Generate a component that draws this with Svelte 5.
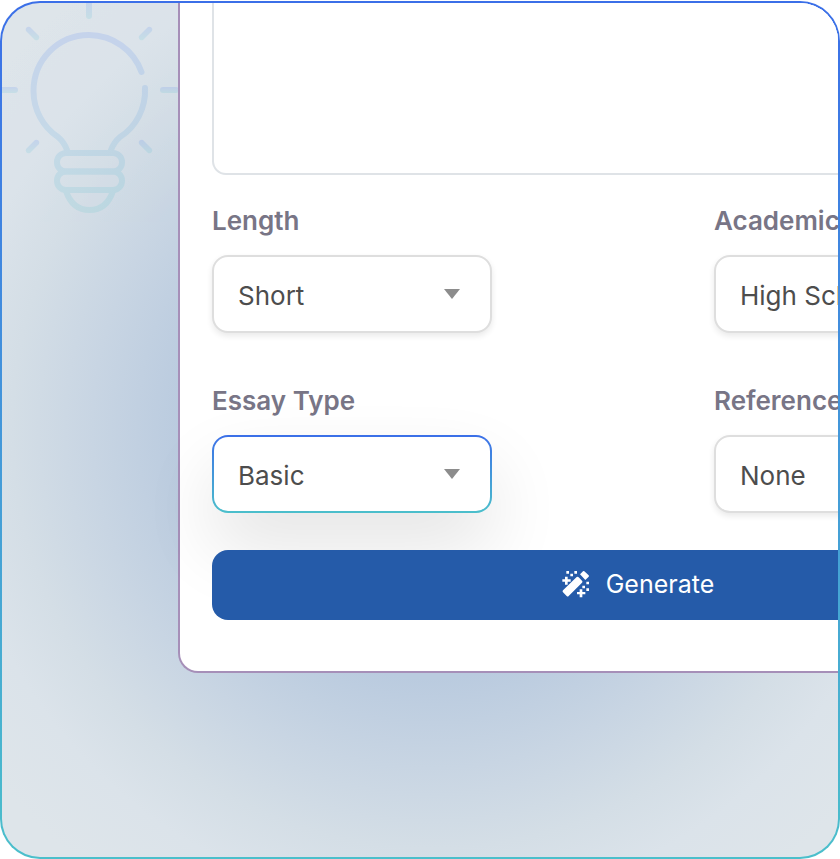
<script>
	let length = $state('Short');
	let level = $state('High School');
	let essayType = $state('Basic');
	let references = $state('None');
	let prompt = $state('');
</script>

{#snippet arrow()}
	<svg class="arrow" viewBox="0 0 16 10" aria-hidden="true">
		<path d="M0 0H16L8 10Z" />
	</svg>
{/snippet}

<main class="frame">
	<svg class="bulb" viewBox="0 0 180 216" aria-hidden="true">
		<defs>
			<linearGradient id="bulb" gradientUnits="userSpaceOnUse" x1="0" y1="30" x2="0" y2="210">
				<stop offset="0" stop-color="#3b6df0" />
				<stop offset="1" stop-color="#46bfc8" />
			</linearGradient>
			<linearGradient id="ray" x1="0" y1="0" x2="0" y2="1">
				<stop offset="0" stop-color="#3b6df0" />
				<stop offset="1" stop-color="#46bfc8" />
			</linearGradient>
		</defs>
		<g fill="none" stroke="url(#bulb)" stroke-width="6" stroke-linecap="round">
			<path d="M141.500 72A56 56 0 0 0 89 35C58 35 33.500 60 33.500 91C33.500 110 43 127 58 137Q64 142 67 150" />
			<path d="M145 88C146 108 136 127 120 137Q114 142 111 150" />
			<rect x="57" y="153" width="65" height="18.500" rx="9" />
			<rect x="57" y="171.500" width="65" height="18.500" rx="9" />
			<path d="M66 191C70 203 78 210 89.500 210C101 210 109 203 113 191" />
		</g>
		<g fill="url(#ray)">
			<rect x="86" y="0" width="6" height="19" rx="3" />
			<rect x="0" y="87" width="18" height="6" rx="3" />
			<rect x="160" y="87" width="19" height="6" rx="3" />
			<path d="M30 27L39 36A3 3 0 0 1 35 40L26 31A3 3 0 0 1 30 27Z" />
			<path d="M148 27L139 36A3 3 0 0 0 143 40L152 31A3 3 0 0 0 148 27Z" />
			<path d="M35 140L26 149A3 3 0 0 0 30 153L39 144A3 3 0 0 0 35 140Z" />
			<path d="M143 140L152 149A3 3 0 0 1 148 153L139 144A3 3 0 0 1 143 140Z" />
		</g>
	</svg>

	<form class="card" onsubmit={(e) => e.preventDefault()}>
		<textarea class="prompt" aria-label="Essay prompt" bind:value={prompt}></textarea>

		<div class="fields">
			<div class="field">
				<label for="length">Length</label>
				<div class="select">
					<select id="length" bind:value={length}>
						<option>Short</option>
						<option>Medium</option>
						<option>Long</option>
					</select>
					{@render arrow()}
				</div>
			</div>
			<div class="field">
				<label for="level">Academic Level</label>
				<div class="select">
					<select id="level" bind:value={level}>
						<option>High School</option>
						<option>College</option>
					</select>
					{@render arrow()}
				</div>
			</div>
			<div class="field">
				<label for="type">Essay Type</label>
				<div class="select active">
					<select id="type" bind:value={essayType}>
						<option>Basic</option>
						<option>Descriptive</option>
					</select>
					{@render arrow()}
				</div>
			</div>
			<div class="field">
				<label for="references">References</label>
				<div class="select">
					<select id="references" bind:value={references}>
						<option>None</option>
						<option>APA</option>
						<option>MLA</option>
					</select>
					{@render arrow()}
				</div>
			</div>
		</div>

		<button class="generate" type="submit">
			<svg class="wand" viewBox="36 30 84 84" aria-hidden="true">
				<path d="M80 51Q83 49 86 52L96 62Q99 65 96 68L56 108Q53 111 50 108L39 97Q36 94 39 91Z" />
				<path d="M99 34Q101 32 103 34L116 46Q118 48 116 50L106 60L90 43Z" />
				<path d="M49 33h8v8h-8zM61 41h8v8h-8zM73 33h8v8h-8zM109 65h8v8h-8zM97 77h8v8h-8zM109 85h8v8h-8z" />
				<path d="M45 50h8v8h9v7h-9v9h-8v-9h-8v-7h8zM89 88h8v8h9v7h-9v9h-8v-9h-8v-7h8z" />
			</svg>
			<span>Generate</span>
		</button>
	</form>
</main>

<style>
	:global(body) {
		background: #fff;
	}
	.frame {
		position: relative;
		box-sizing: border-box;
		min-height: calc(100vh - 1px);
		margin-top: 1px;
		border: 2px solid transparent;
		border-radius: 40px;
		overflow: hidden;
		background:
			radial-gradient(circle at 430px 425px, #b9cade 0, #bacbdf 250px, #c8d5e3 340px, #d4dee6 420px, #dbe3ea 480px, #dee5ea 560px) padding-box,
			linear-gradient(#3b6fe8, #4bbfcb) border-box;
		font-family: Inter, "Liberation Sans", sans-serif;
	}
	.bulb {
		position: absolute;
		top: -3px;
		left: -2px;
		width: 180px;
		height: 216px;
		opacity: 0.14;
	}
	.card {
		position: relative;
		box-sizing: border-box;
		margin-left: 176px;
		margin-right: -260px;
		padding: 0 32px 51px;
		border: 2px solid #a68fb8;
		border-top: 0;
		border-radius: 0 0 20px 20px;
		background: #fff;
	}
	.prompt {
		display: block;
		box-sizing: border-box;
		width: 100%;
		height: 172px;
		padding: 24px;
		border: 2px solid #dfe3e7;
		border-top: 0;
		border-radius: 0 0 14px 14px;
		outline: none;
		resize: none;
		font: inherit;
		font-size: 26px;
	}
	.fields {
		display: grid;
		grid-template-columns: 1fr 1fr;
		gap: 48px 152px;
		margin-top: 26px;
	}
	.field {
		display: flex;
		flex-direction: column;
		gap: 14px;
	}
	label {
		color: #787586;
		font-size: 26px;
		font-weight: 600;
		line-height: 40px;
		white-space: nowrap;
	}
	.select {
		position: relative;
		max-width: 280px;
	}
	select {
		display: block;
		box-sizing: border-box;
		width: 100%;
		height: 78px;
		padding: 2px 56px 0 24px;
		border: 2px solid #dedede;
		border-radius: 16px;
		appearance: none;
		background: #fff;
		box-shadow: 0 3px 6px rgba(0, 0, 0, 0.09);
		color: #4d4d4d;
		font: inherit;
		font-size: 26px;
	}
	.active select {
		border-color: transparent;
		background:
			linear-gradient(#fff, #fff) padding-box,
			linear-gradient(#3b6fe8, #4bbfcb) border-box;
		box-shadow: 0 34px 72px rgba(0, 0, 0, 0.11);
	}
	.arrow {
		position: absolute;
		top: 34px;
		right: 32px;
		width: 16px;
		height: 10px;
		fill: #8c8c8c;
		pointer-events: none;
	}
	.generate {
		position: relative;
		display: flex;
		align-items: center;
		justify-content: center;
		gap: 16px;
		width: 100%;
		height: 70px;
		margin-top: 37px;
		padding: 0 0 2px;
		border: 0;
		border-radius: 16px;
		background: #255ba9;
		color: #fff;
		font: inherit;
		font-size: 25px;
		cursor: pointer;
	}
	.wand {
		width: 28px;
		height: 28px;
		fill: #fff;
	}
</style>
